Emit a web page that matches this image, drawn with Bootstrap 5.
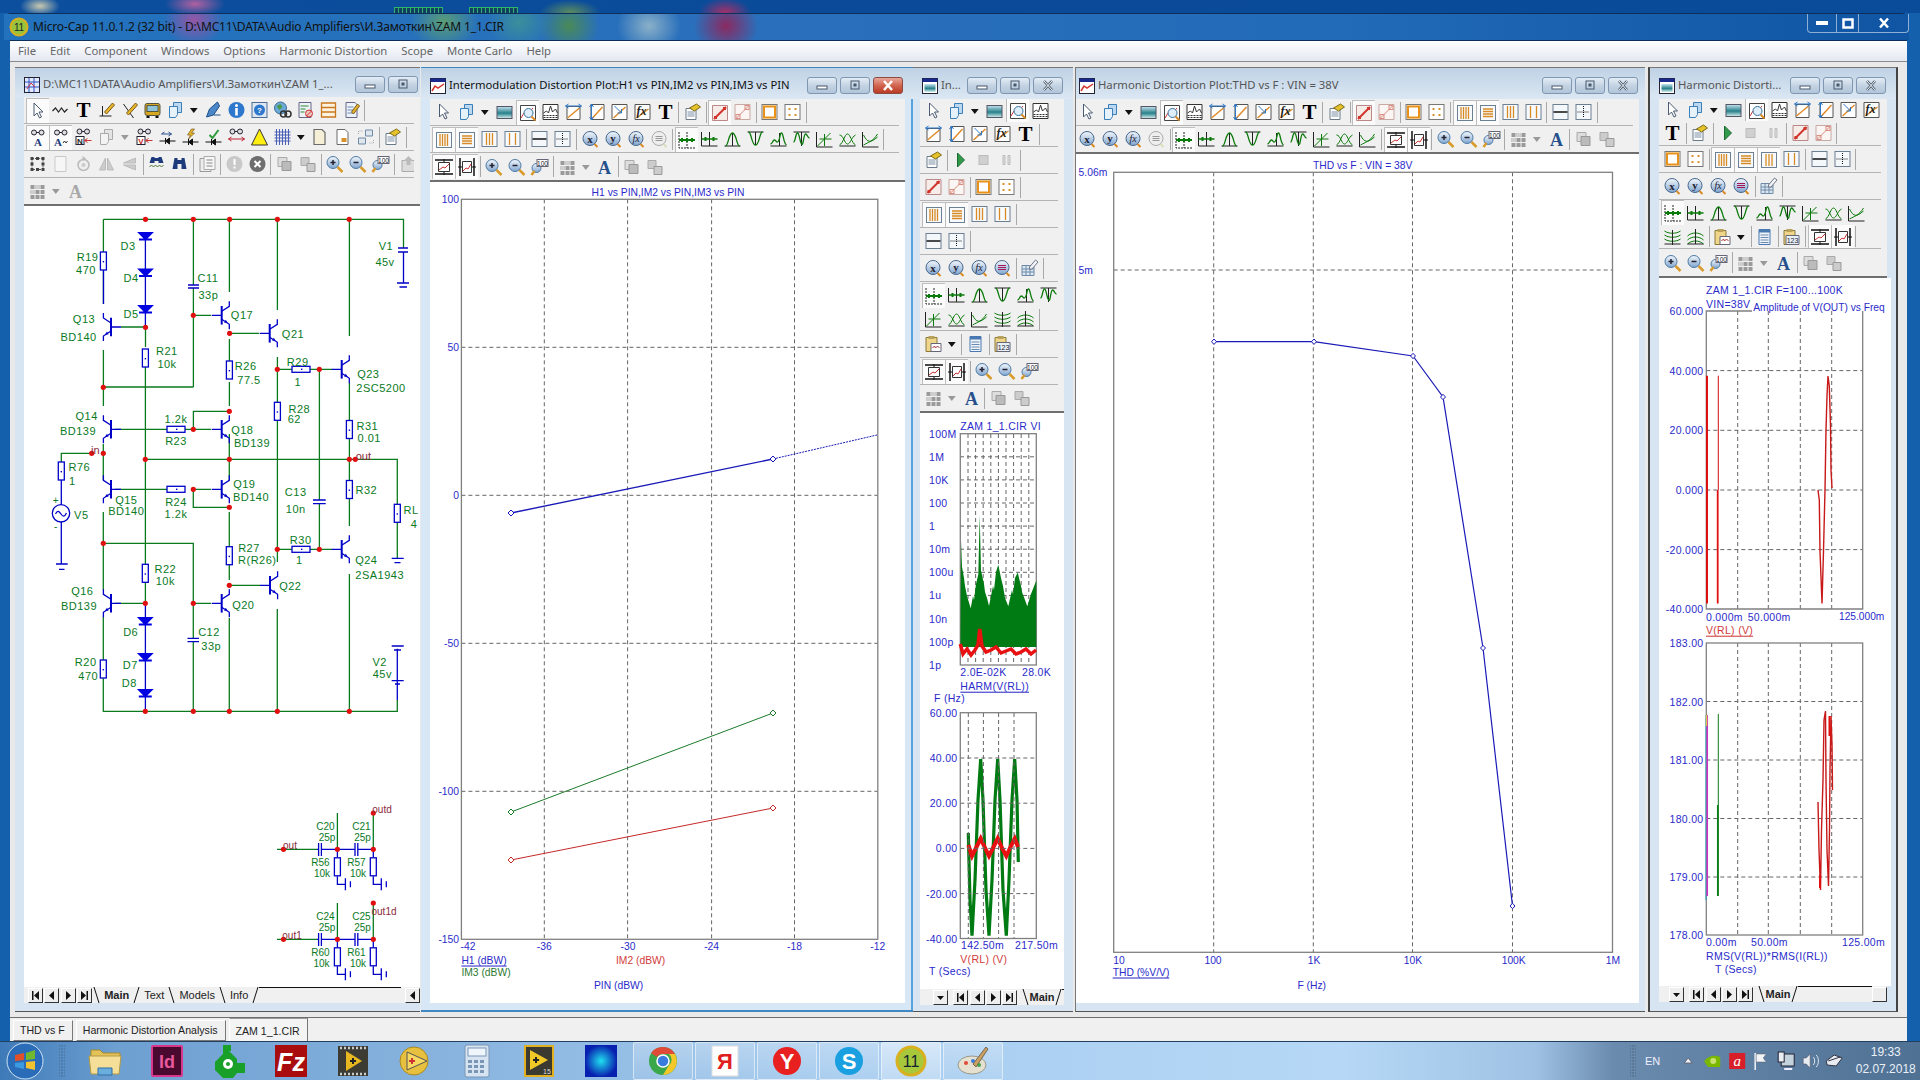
<!DOCTYPE html>
<html lang="en"><head><meta charset="utf-8"><title>Micro-Cap</title>
<link href="https://cdn.jsdelivr.net/npm/bootstrap@5.3.0/dist/css/bootstrap.min.css" rel="stylesheet">
<style>
html,body{margin:0;width:1920px;height:1080px;overflow:hidden}
body{background:#1560ad;font-family:"Noto Sans","Liberation Sans",sans-serif;font-size:12px;color:#222}
.sky{height:13px;background:radial-gradient(ellipse 30px 12px at 195px 4px,#b060a0,transparent),radial-gradient(ellipse 20px 10px at 40px 6px,#c8c8b0,transparent),radial-gradient(ellipse 30px 12px at 570px 12px,#5a8a60,transparent),radial-gradient(ellipse 26px 14px at 725px 12px,#a0306a,transparent),linear-gradient(90deg,#0c4f9e,#0a4a98 50%,#0a4c9a)}
.mkw{width:49px;height:6px;border:1px solid #2fb56a;border-bottom:0;margin-top:7px;flex:none;background:repeating-linear-gradient(90deg,#123e62 0 3px,#2fb56a 3px 4px)}
.mk1{margin-left:394px}.mk2{margin-left:26px}
.mainw{height:1028px;margin-left:4px;width:1905px;border-radius:7px 7px 0 0;border-top:1px solid #0d2f5a}
.ttl{height:26px;padding-left:5px;color:#111;font-size:12px;letter-spacing:-.15px;background:radial-gradient(ellipse 30px 26px at 190px 6px,#b050a0cc,transparent),radial-gradient(ellipse 34px 28px at 440px 8px,#5a9d76,transparent),radial-gradient(ellipse 32px 28px at 515px 8px,#3a8f9a,transparent),radial-gradient(ellipse 30px 28px at 565px 12px,#4a8a58,transparent),radial-gradient(ellipse 32px 28px at 645px 12px,#8ab0c8,transparent),radial-gradient(ellipse 32px 30px at 722px 12px,#8a2a60,transparent),linear-gradient(90deg,#2272bd,#2a6fbb 40%,#226bb8 70%,#0f55a3)}
.ctl{margin-left:auto;height:19px;width:102px;border:1px solid #8eb0d4;border-top:0;border-radius:0 0 4px 4px;align-self:flex-start}
.ctl span{display:flex;align-items:center;justify-content:center;border-right:1px solid #8eb0d4}
.ctl span:last-child{border-right:0}
.c1{width:30px}.c2{width:22px}.c3{width:50px}
.client{margin-left:6px;margin-right:2px;height:1001px;background:#f0f0f0;border-top:1px solid #0d2f5a}
.menub{height:20px;background:linear-gradient(#fff,#eef1f7 60%,#e4e8f0);padding-left:8px;color:#666;font-size:11.3px}
.menub span{margin-right:14px}
.mdi{height:957px;background:#e9e9e9;border-top:1px solid #8a8a8a;border-bottom:1px solid #6e6e6e;padding:5px 0 0 5px}
.cw{height:945px;background:#d7e4f1;border-top:1px solid #777;border-bottom:1px solid #555;flex:none}
.cw1{width:405px;padding-left:9px}
.cw2{width:492px;margin-left:1px;padding:0 8px 0 9px;background:#d8e7f5;box-shadow:inset -2px 0 #58a3dd;border-bottom:2px solid #3f88c4;border-top:1px solid #3f88c4}
.cw3{width:160px;padding:0 9px 0 7px}
.cw4{width:570px;margin-left:2px;padding-right:6px;border-left:1px solid #777}
.cw5{width:250px;margin-left:3px;padding:0 9px;border-left:2px solid #444;border-right:2px solid #444}
.head{height:31px;background:linear-gradient(#bfd2e5,#dbe7f3);margin:0 -8px 0 -9px;padding:9px 10px 0 9px;font-size:11.3px;color:#555;white-space:nowrap;overflow:hidden;flex:none}
.cw1 .head{height:29px;padding-top:8px;margin-right:0;padding-right:2px}
.cw2 .head{color:#111}
.cw3 .head{margin:0 -9px 0 -7px;padding:9px 10px 0 9px}
.cw4 .head{margin:0 -6px 0 0;padding:9px 7px 0 3px}
.cw5 .head{margin:0 -9px;padding:9px 10px 0 9px}
.hic{width:16px;height:18px;flex:none;margin-right:3px}
.wb{width:30px;height:17px;flex:none;margin-left:3px;border:1px solid #7f97b0;border-radius:3px;background:linear-gradient(#e4edf6,#c4d3e3 50%,#b2c5d9);display:flex;align-items:center;justify-content:center}
.wbr{background:linear-gradient(#e9a79b,#d2654f 50%,#b93b26);border-color:#8a4a40}
.wb svg{width:14px;height:11px}
.tbar{background:#f0f0f0;border-bottom:2px solid #6f6f6f;flex:none}
.tr{height:27px;border-bottom:1px solid #b4b4b4;flex-wrap:nowrap;padding-left:2px;margin-right:6px;overflow:hidden}
.tr.nl{border-bottom:0;margin-right:0}
.h22{height:22px}.h23{height:23px}.h24{height:24px}.h25{height:25px}.h26{height:26px}
.ti{width:23px;height:18px;flex:none}
.ti.on{height:25px;padding:3px 1px;background:#fbfbfb;border-left:1px solid #bdbdbd;border-top:1px solid #bdbdbd}
.dd{width:14.6px;height:18px;flex:none}
.sp{width:1px;height:21px;margin:0 1.65px;background:#a8a8a8;flex:none}
.cvs{display:block;background:#fff;flex:none}
.ct text{font-family:"Liberation Sans",sans-serif;font-size:11px;fill:#0a7a1e;text-anchor:middle;dominant-baseline:central;letter-spacing:.5px}
.ct .br{fill:#8a2a3a;letter-spacing:0}
.ct .s{font-size:10px;letter-spacing:0}
.pt text{font-family:"Liberation Sans",sans-serif;font-size:10.3px;fill:#2a2acb;dominant-baseline:central}
.pt .wd text{letter-spacing:.3px;font-size:10.5px}
.pt .wd .nosp{letter-spacing:0;font-size:10.2px}
.pt .gr{fill:#2c7a32}.pt .rd{fill:#d23b3b}
.pt .ra{text-anchor:end}.pt .mi{text-anchor:middle}
.bx{fill:none;stroke:#808080;stroke-width:1.3}
.gd{stroke:#666;stroke-dasharray:4 3;fill:none}
.wr{stroke:#0a7a1e;stroke-width:1.3;fill:none}
.cp{stroke:#0000c8;stroke-width:1.3;fill:none}
.rs{stroke:#0000c8;stroke-width:1.3;fill:#fff}
.dt{fill:#e01010}
.tabs{height:16px;background:#f0f0f0;font-family:"Liberation Sans",sans-serif;font-size:11px;color:#222;overflow:hidden;flex:none}
.pl13{padding-left:13px}.pl10{padding-left:10px}.wn{width:16px}.wh{width:15px;height:8px}
.nb{width:15px;height:15px;flex:none;border:1px solid #777;border-right-color:#333;border-bottom-color:#333;border-top-color:#fff;border-left-color:#fff;margin-right:1.3px;background:#eee;display:flex;align-items:center;justify-content:center}
.nb svg{width:9px;height:11px}
.sl{width:7px;height:16px;flex:none}
.tln{border-top:1.5px solid #111;height:16px;flex-grow:1}
.btabs{height:23px;font-family:"Liberation Sans",sans-serif;font-size:10.6px;color:#222;padding-left:3px;align-items:flex-end}
.btabs span{height:21px;border:1px solid #fff;border-right-color:#777;border-bottom-color:#777;margin-right:3px;padding:2px 7px 0 6px;background:#f0f0f0}
.btabs .act{border-bottom:0;height:23px;padding-top:5px;border-top:1px solid #999;background:#f4f4f4}
.task{height:39px;background:linear-gradient(90deg,#3e7ab8,#6d9fd1 6%,#86b2dd 22%,#a8cdf0 45%,#b6d8f6 70%,#9fc2e4 80%,#6a8bad 84%,#4f7194 100%);border-top:1px solid #223f5f;color:#e8eef5;font-family:"Liberation Sans",sans-serif}
.orb{width:50px;height:38px;flex:none;padding-left:6px}
.grip{width:24px;height:34px;flex:none;background-image:radial-gradient(#33465c 40%,transparent 45%);background-size:3px 3px;background-position:center;background-repeat:repeat;margin:2px 0;clip-path:inset(0 9px)}
.tk{width:62px;height:38px;flex:none;display:flex;align-items:center;justify-content:center}
.tk.rn{border:1px solid #ffffff88;border-radius:2px;background:linear-gradient(#ffffff44,#ffffff11);width:60px;margin:0 1px}
.tk.cur{background:linear-gradient(#ffffff88,#ffffff44)}
.tk svg{width:40px;height:34px}
.tray{margin-left:auto;width:299px}
.clock{text-align:center;font-size:12px;line-height:17px;width:80px;color:#eaf1f8;margin-left:9px}
.tryi{width:24.4px;height:20px;flex:none}
.trl{font-size:11px;color:#eef;width:31px}
.shd{width:14px;height:38px;margin-left:7px;background:linear-gradient(90deg,#466a8e,#7898b8);border-left:1px solid #ccd}
</style></head>
<body>
<svg width="0" height="0" class="d-block" aria-hidden="true"><defs>
<linearGradient id="bc" x1="0" y1="0" x2="0" y2="1"><stop offset="0" stop-color="#f4f8fc"/><stop offset="1" stop-color="#7fa4cf"/></linearGradient>
<linearGradient id="tl" x1="0" y1="0" x2="0" y2="1"><stop offset="0" stop-color="#c6e4f0"/><stop offset=".55" stop-color="#27808a"/><stop offset="1" stop-color="#d9f1ef"/></linearGradient>
<symbol id="ia" viewBox="0 0 18 18"><path d="M5 1v13l3-3 2.500 5 2-1-2.500-5h4z" fill="#fff" stroke="#4a5a70"/></symbol>
<symbol id="cp" viewBox="0 0 18 18"><path d="M7 1.500h8v10H7z" fill="#bcd8f0" stroke="#3b7fb8"/><path d="M3 5.500h8v8l-2 3H3z" fill="#e6f2fb" stroke="#3b7fb8"/></symbol>
<symbol id="gcp" viewBox="0 0 18 18"><path d="M7 1.500h8v10H7z" fill="#e4e4e4" stroke="#aaa"/><path d="M3 5.500h8v8l-2 3H3z" fill="#f3f3f3" stroke="#aaa"/></symbol>
<symbol id="dd" viewBox="0 0 15 18"><path d="M3 7h8l-4 5z" fill="#111"/></symbol>
<symbol id="ddg" viewBox="0 0 15 18"><path d="M3 7h8l-4 5z" fill="#999"/></symbol>
<symbol id="pic" viewBox="0 0 18 18"><rect x="1.500" y="3.500" width="15" height="12" fill="url(#tl)" stroke="#556"/></symbol>
<symbol id="zp" viewBox="0 0 18 18"><path d="M1.500 1.500h15v15h-15z" fill="#fff" stroke="#444"/><path d="M2 14l3-5 3 2 6-7" fill="none" stroke="#c33"/><circle cx="9.500" cy="9" r="4.500" fill="#dfeefb" stroke="#36719f"/><path d="M12.500 12.500l4 4" stroke="#d98a24" stroke-width="2"/></symbol>
<symbol id="pk" viewBox="0 0 18 18"><path d="M1.500 1.500h15v15h-15z" fill="#fff" stroke="#333"/><path d="M2 10l3-2 2 2 2-7 2 6 3-3 2 4" fill="none" stroke="#333"/><path d="M2 12.500h14M2 14.500h14" stroke="#333" stroke-dasharray="2 1"/></symbol>
<symbol id="ah" viewBox="0 0 18 18"><path d="M2.500 3.500h13v13h-13z" fill="#fff" stroke="#555"/><path d="M3 15L15 5" stroke="#e08a2a" stroke-width="1.500"/><path d="M1 3h16M1 3l3-2M1 3l3 2M17 3l-3-2M17 3l-3 2" stroke="#2d78c8" fill="none"/></symbol>
<symbol id="av" viewBox="0 0 18 18"><path d="M3.500 1.500h13v15h-13z" fill="#fff" stroke="#555"/><path d="M5 15L15 4" stroke="#e08a2a" stroke-width="1.500"/><path d="M4 1v16M4 1L2 4M4 1l2 3M4 17l-2-3M4 17l2-3" stroke="#2d78c8" fill="none"/></symbol>
<symbol id="ad" viewBox="0 0 18 18"><path d="M1.500 1.500h15v15h-15z" fill="#fff" stroke="#555"/><path d="M3 15L15 4" stroke="#e08a2a" stroke-width="1.500"/><path d="M4 3l7 7M11 10V6M11 10H7" stroke="#2d78c8" fill="none"/></symbol>
<symbol id="fx" viewBox="0 0 18 18"><path d="M1.500 1.500h15v15h-15z" fill="#fff" stroke="#555"/><path d="M3 15L15 6" stroke="#e08a2a" stroke-width="1.500"/><text x="3" y="12" font-family="Liberation Serif" font-size="12" font-style="italic" font-weight="700" fill="#222">fx</text></symbol>
<symbol id="tt" viewBox="0 0 18 18"><text x="9" y="16" text-anchor="middle" font-family="Liberation Serif" font-size="21" font-weight="700" fill="#000">T</text></symbol>
<symbol id="nt" viewBox="0 0 18 18"><path d="M2.500 5.500h10v11h-10z" fill="#fff" stroke="#6a7a8a"/><path d="M4 9h7M4 11h7M4 13h7" stroke="#7a8fa6"/><path d="M6 5l7-4 4 3-6 4z" fill="#e6c22a" stroke="#7a6a1a"/></symbol>
<symbol id="r1" viewBox="0 0 18 18"><path d="M1.500 1.500h15v15h-15z" fill="#f6ece8" stroke="#b88"/><path d="M3 15L15 3" stroke="#d2342c" stroke-width="2"/><rect x="3" y="12" width="3" height="3" fill="#d2342c"/><rect x="12" y="3" width="3" height="3" fill="#d2342c"/></symbol>
<symbol id="r2" viewBox="0 0 18 18"><path d="M1.500 1.500h15v15h-15z" fill="#fbf6f4" stroke="#c9a9a3"/><path d="M3 15L15 3" stroke="#d98c80"/><rect x="2.500" y="11.500" width="4" height="4" fill="none" stroke="#d98c80"/><rect x="11.500" y="2.500" width="4" height="4" fill="none" stroke="#d98c80"/></symbol>
<symbol id="os" viewBox="0 0 18 18"><rect x="1.500" y="1.500" width="15" height="15" fill="#fff3d8" stroke="#777"/><rect x="3.500" y="3.500" width="11" height="11" fill="#fff" stroke="#e8921c" stroke-width="2"/></symbol>
<symbol id="ds" viewBox="0 0 18 18"><rect x="1.500" y="1.500" width="15" height="15" fill="#fff" stroke="#777"/><path d="M5 5h2v2H5zM11 5h2v2h-2zM5 11h2v2H5zM11 11h2v2h-2z" fill="#d8912a"/></symbol>
<symbol id="vb" viewBox="0 0 18 18"><rect x="1.500" y="1.500" width="15" height="15" fill="#f7fbff" stroke="#6d7f92"/><path d="M5 3v12M7.500 3v12M10 3v12M12.500 3v12" stroke="#d98a24" stroke-width="1.300"/></symbol>
<symbol id="hb" viewBox="0 0 18 18"><rect x="1.500" y="1.500" width="15" height="15" fill="#f7fbff" stroke="#6d7f92"/><path d="M4 5h10M4 7.500h10M4 10h10M4 12.500h10" stroke="#d98a24" stroke-width="1.300"/></symbol>
<symbol id="v3" viewBox="0 0 18 18"><rect x="1.500" y="1.500" width="15" height="15" fill="#f7fbff" stroke="#6d7f92"/><path d="M6 3v12M9 3v12M12 3v12" stroke="#d98a24" stroke-width="1.300"/></symbol>
<symbol id="v2" viewBox="0 0 18 18"><rect x="1.500" y="1.500" width="15" height="15" fill="#f7fbff" stroke="#6d7f92"/><path d="M6 3v12M12 3v12" stroke="#d98a24" stroke-width="1.300"/></symbol>
<symbol id="hl" viewBox="0 0 18 18"><rect x="1.500" y="1.500" width="15" height="15" fill="#f4f8fb" stroke="#6d7f92"/><path d="M2 9h14" stroke="#111" stroke-width="1.500"/></symbol>
<symbol id="cr" viewBox="0 0 18 18"><rect x="1.500" y="1.500" width="15" height="15" fill="#f4f8fb" stroke="#6d7f92"/><path d="M3 9h12M9 3v12" stroke="#111" stroke-dasharray="1 1"/></symbol>
<symbol id="cx" viewBox="0 0 18 18"><circle cx="8.500" cy="8.500" r="7" fill="url(#bc)" stroke="#48688e"/><text x="8.500" y="12.500" text-anchor="middle" font-family="Liberation Serif" font-weight="700" font-size="11" fill="#223">x</text><path d="M13 14l3 3" stroke="#d98a24" stroke-width="2"/></symbol>
<symbol id="cy" viewBox="0 0 18 18"><circle cx="8.500" cy="8.500" r="7" fill="url(#bc)" stroke="#48688e"/><text x="8.500" y="12" text-anchor="middle" font-family="Liberation Serif" font-weight="700" font-size="11" fill="#223">y</text><path d="M13 14l3 3" stroke="#d98a24" stroke-width="2"/></symbol>
<symbol id="cf" viewBox="0 0 18 18"><circle cx="8.500" cy="8.500" r="7" fill="url(#bc)" stroke="#48688e"/><text x="8.500" y="12" text-anchor="middle" font-family="Liberation Serif" font-style="italic" font-size="10" fill="#223">fx</text><path d="M13 14l3 3" stroke="#d98a24" stroke-width="2"/></symbol>
<symbol id="cg" viewBox="0 0 18 18"><circle cx="8.500" cy="8.500" r="7" fill="#eee" stroke="#aaa"/><path d="M5 6.500h7M5 8.500h7M5 10.500h7" stroke="#999"/><path d="M13 14l3 3" stroke="#ddb" stroke-width="2"/></symbol>
<symbol id="ce" viewBox="0 0 18 18"><circle cx="8.500" cy="8.500" r="7" fill="url(#bc)" stroke="#48688e"/><path d="M4.500 6.500h8M4.500 8.500h8M4.500 10.500h8" stroke="#a2185a"/><path d="M13 14l3 3" stroke="#d98a24" stroke-width="2"/></symbol>
<symbol id="tb" viewBox="0 0 18 18"><path d="M1.500 6.500h12v10h-12z" fill="#dbe8f4" stroke="#6f8aa6"/><path d="M1.500 10h12M1.500 13h12M5.500 6.500v10M9.500 6.500v10" stroke="#6f8aa6"/><path d="M9 8l6-7 2.500 2-6 7H9z" fill="#eef3f8" stroke="#778"/></symbol>
<symbol id="g1" viewBox="0 0 18 18"><path d="M1 1v16h16M1 9h16M9 1v16" fill="none" stroke="#222" stroke-dasharray="2 1"/><path d="M1 9h16" stroke="#0a7a0a" stroke-width="2"/><path d="M4 7v4M9 7v4M14 7v4" stroke="#0a7a0a" stroke-width="2"/></symbol>
<symbol id="g2" viewBox="0 0 18 18"><path d="M1 2v14h16M9 2v14" fill="none" stroke="#222"/><path d="M1 9h16" stroke="#0a7a0a" stroke-width="1.500"/><path d="M5 7v4M13 7v4" stroke="#0a7a0a" stroke-width="2"/></symbol>
<symbol id="g3" viewBox="0 0 18 18"><path d="M1 16h16M9 3v13" fill="none" stroke="#222"/><path d="M2 16C5 16 5 3 9 3s4 13 7 13" fill="none" stroke="#0a7a0a" stroke-width="1.300"/></symbol>
<symbol id="g4" viewBox="0 0 18 18"><path d="M1 2h16M9 2v13" fill="none" stroke="#222"/><path d="M2 2c3 0 3 13 7 13s4-13 7-13" fill="none" stroke="#0a7a0a" stroke-width="1.300"/></symbol>
<symbol id="g5" viewBox="0 0 18 18"><path d="M1 16h16M10 3v13" fill="none" stroke="#222"/><path d="M1 14c2 0 2-4 4-4s2 4 4 1 1-8 3-8 2 11 5 12" fill="none" stroke="#0a7a0a" stroke-width="1.300"/></symbol>
<symbol id="g6" viewBox="0 0 18 18"><path d="M1 2h16M9 2v14" fill="none" stroke="#222"/><path d="M1 12c2 0 2-9 4-9s2 8 4 11 2-10 4-10 2 4 4 4" fill="none" stroke="#0a7a0a" stroke-width="1.300"/></symbol>
<symbol id="g7" viewBox="0 0 18 18"><path d="M1 2v15h16" fill="none" stroke="#222"/><path d="M2 16L15 3M9 4v12M4 9h12" fill="none" stroke="#0a7a0a"/></symbol>
<symbol id="g8" viewBox="0 0 18 18"><path d="M1 16h16" fill="none" stroke="#222"/><path d="M1 15c4-2 5-11 8-11s4 9 8 11M1 5c4 0 5 9 8 9s4-7 8-9" fill="none" stroke="#0a7a0a"/></symbol>
<symbol id="g9" viewBox="0 0 18 18"><path d="M1 2v15h16" fill="none" stroke="#222"/><path d="M2 5c4 8 7 8 14 2M2 15c5-3 9-3 14-11" fill="none" stroke="#0a7a0a"/></symbol>
<symbol id="g10" viewBox="0 0 18 18"><path d="M1 3c4 3 12 3 16 0M1 7c4 3 12 3 16 0M1 11c4 3 12 3 16 0" fill="none" stroke="#0a7a0a"/><path d="M9 2v15M1 16h16" stroke="#222"/></symbol>
<symbol id="g11" viewBox="0 0 18 18"><path d="M1 8c4-4 12-4 16 0M1 12c4-4 12-4 16 0M1 16c4-4 12-4 16 0" fill="none" stroke="#0a7a0a"/><path d="M9 1v15M1 16h16" stroke="#222"/></symbol>
<symbol id="cl" viewBox="0 0 18 18"><path d="M1.500 2.500h11v14h-11z" fill="#efd68a" stroke="#8a7a3a"/><rect x="4" y="1" width="6" height="3" fill="#b8a15a"/><path d="M6.500 8.500h10v8h-10z" fill="#fff" stroke="#667"/><path d="M8 13l2-2 1 2 2-2 2 2" fill="none" stroke="#a33"/></symbol>
<symbol id="cn" viewBox="0 0 18 18"><path d="M1.500 2.500h11v14h-11z" fill="#efd68a" stroke="#8a7a3a"/><rect x="4" y="1" width="6" height="3" fill="#b8a15a"/><path d="M3.500 7.500h13v9h-13z" fill="#e8f1f8" stroke="#667"/><text x="10" y="15" text-anchor="middle" font-family="Liberation Sans" font-size="7" fill="#223">123</text></symbol>
<symbol id="ls" viewBox="0 0 18 18"><path d="M3.500 1.500h11v15h-11z" fill="#eef4fa" stroke="#4a78b0"/><path d="M3.500 1.500h11v3h-11z" fill="#4a78b0"/><path d="M5 7h8M5 9.500h8M5 12h8M5 14.500h8" stroke="#6a8ab0"/></symbol>
<symbol id="s1" viewBox="0 0 18 18"><path d="M3.500 4.500h11v9h-11z" fill="#fff" stroke="#333"/><path d="M0 2h18M0 16h18" stroke="#111" stroke-width="1.500"/><path d="M4 12l4-3 2 1 4-4" fill="none" stroke="#c33"/><path d="M9 1v3M9 14v3" stroke="#111"/></symbol>
<symbol id="s2" viewBox="0 0 18 18"><path d="M4.500 3.500h9v11h-9z" fill="#fff" stroke="#333"/><path d="M2 0v18M16 0v18" stroke="#111" stroke-width="1.500"/><path d="M5 13l3-3 2 1 3-5" fill="none" stroke="#c33"/><path d="M0 9h4M14 9h4" stroke="#111"/></symbol>
<symbol id="zi" viewBox="0 0 18 18"><circle cx="7.500" cy="7.500" r="6" fill="url(#bc)" stroke="#4d7aa4"/><path d="M5 7.500h5M7.500 5v5" stroke="#223" stroke-width="1.500"/><path d="M12 12l5 5" stroke="#d89a2a" stroke-width="2.500"/></symbol>
<symbol id="zo" viewBox="0 0 18 18"><circle cx="7.500" cy="7.500" r="6" fill="url(#bc)" stroke="#4d7aa4"/><path d="M5 7.500h5" stroke="#223" stroke-width="1.500"/><path d="M12 12l5 5" stroke="#d89a2a" stroke-width="2.500"/></symbol>
<symbol id="z1" viewBox="0 0 18 18"><circle cx="6" cy="10" r="4.500" fill="url(#bc)" stroke="#4d7aa4"/><path d="M4 13l-3 4" stroke="#d89a2a" stroke-width="2.500"/><rect x="6.500" y="1.500" width="11" height="7" fill="#fff" stroke="#667"/><text x="12" y="7.500" text-anchor="middle" font-family="Liberation Sans" font-size="6.500" fill="#223">100</text></symbol>
<symbol id="gd" viewBox="0 0 18 18"><path d="M2 3h4v4H2zM7 3h4v4H7zM12 3h4v4h-4zM2 8h4v4H2zM7 8h4v4H7zM12 8h4v4h-4zM2 13h4v4H2zM7 13h4v4H7zM12 13h4v4h-4z" fill="#9a9a9a"/><path d="M7 3h4v4H7zM2 8h4v4H2z" fill="#cfcfcf"/></symbol>
<symbol id="bA" viewBox="0 0 18 18"><text x="9" y="16" text-anchor="middle" font-family="Liberation Serif" font-size="18" font-weight="700" fill="#26508c">A</text></symbol>
<symbol id="gA" viewBox="0 0 18 18"><text x="9" y="16" text-anchor="middle" font-family="Liberation Serif" font-size="18" font-weight="700" fill="#a8a8a8">A</text></symbol>
<symbol id="q1" viewBox="0 0 18 18"><path d="M2.500 2.500h9v9h-9z" fill="#ddd" stroke="#aaa"/><path d="M6.500 6.500h9v9h-9z" fill="#bbb" stroke="#999"/></symbol>
<symbol id="q2" viewBox="0 0 18 18"><path d="M2.500 2.500h8v8h-8z" fill="#ccc" stroke="#aaa"/><path d="M8.500 8.500h8v8h-8z" fill="#ccc" stroke="#999"/></symbol>
<symbol id="pl" viewBox="0 0 18 18"><path d="M6 2l7 7-7 7z" fill="#2f9a4a" stroke="#1d6a30"/></symbol>
<symbol id="st" viewBox="0 0 18 18"><rect x="4.500" y="4.500" width="9" height="9" fill="#d0d0d0" stroke="#bbb"/></symbol>
<symbol id="pa" viewBox="0 0 18 18"><path d="M5.500 4.500h2v9h-2zM10.500 4.500h2v9h-2z" fill="#e0e0e0" stroke="#bbb"/></symbol>
<symbol id="wv" viewBox="0 0 18 18"><path d="M1 10l3-3 3 4 3-4 3 4 3-3" fill="none" stroke="#222" stroke-width="1.200"/></symbol>
<symbol id="p1" viewBox="0 0 18 18"><path d="M2 15h12M5 15V5" stroke="#222" fill="none"/><path d="M7 11L15 2l2 2-8 9z" fill="#e8b62a" stroke="#7a5a1a"/></symbol>
<symbol id="p2" viewBox="0 0 18 18"><path d="M3 3l10 14" stroke="#222"/><path d="M6 12L15 2l2 2-9 10z" fill="#e8b62a" stroke="#7a5a1a"/></symbol>
<symbol id="bu" viewBox="0 0 18 18"><rect x="1.500" y="2.500" width="15" height="12" rx="2" fill="#d8a81e" stroke="#554"/><rect x="3.500" y="4.500" width="11" height="6" fill="#8fc4d8" stroke="#554"/><path d="M3 16h3M12 16h3" stroke="#111" stroke-width="2"/></symbol>
<symbol id="pn" viewBox="0 0 18 18"><path d="M2 16l3-8 8-7 2 4-6 9z" fill="#4a86c8" stroke="#1f4f8a"/><path d="M9 14h7" stroke="#1f4f8a"/></symbol>
<symbol id="in" viewBox="0 0 18 18"><circle cx="9" cy="9" r="8" fill="#2d78cc"/><circle cx="9" cy="4.500" r="1.500" fill="#fff"/><rect x="7.700" y="7" width="2.600" height="7.500" fill="#fff"/></symbol>
<symbol id="hp" viewBox="0 0 18 18"><rect x="1.500" y="1.500" width="15" height="15" fill="#dfe8f2" stroke="#4c6e94"/><circle cx="9" cy="9" r="5.500" fill="#2d78cc"/><text x="9" y="12" text-anchor="middle" font-family="Liberation Sans" font-size="8" font-weight="700" fill="#fff">?</text></symbol>
<symbol id="gl" viewBox="0 0 18 18"><circle cx="7" cy="7" r="6" fill="#6aa9d8" stroke="#3d6f98"/><path d="M3 5l4-2 2 3-3 3z" fill="#4a9a4a"/><circle cx="10" cy="13" r="3" fill="none" stroke="#333" stroke-width="1.500"/><circle cx="14.500" cy="13" r="3" fill="none" stroke="#333" stroke-width="1.500"/></symbol>
<symbol id="ck" viewBox="0 0 18 18"><path d="M2.500 1.500h12v15h-12z" fill="#eef3f8" stroke="#668"/><path d="M4 5h8M4 8h5M4 11h4" stroke="#2f8a3a"/><circle cx="12.500" cy="12.500" r="3.500" fill="#f0c8c0" stroke="#c33"/><path d="M10 15l5-5" stroke="#c33"/></symbol>
<symbol id="ol" viewBox="0 0 18 18"><path d="M2 2h14v14H2zM2 6.500h14M2 11h14" fill="#fdf3df" stroke="#c9781e" stroke-width="1.300"/></symbol>
<symbol id="dp" viewBox="0 0 18 18"><path d="M3.500 1.500h9l2 2v13h-11z" fill="#eef3fa" stroke="#668"/><path d="M5 6h6M5 9h6M5 12h6" stroke="#6a8ab0"/><path d="M9 11l6-8 2 2-6 8z" fill="#e8b62a" stroke="#7a5a1a"/></symbol>
<symbol id="ga" viewBox="0 0 18 18"><circle cx="5" cy="3.500" r="2.500" fill="#ddd" stroke="#223"/><circle cx="12.500" cy="3.500" r="2.500" fill="#ddd" stroke="#223"/><path d="M7 3.500h3" stroke="#223"/><text x="9" y="16.500" text-anchor="middle" font-family="Liberation Serif" font-weight="700" font-size="11" fill="#1c3a7c">A</text></symbol>
<symbol id="gw" viewBox="0 0 18 18"><circle cx="5" cy="3.500" r="2.500" fill="#ddd" stroke="#223"/><circle cx="12.500" cy="3.500" r="2.500" fill="#ddd" stroke="#223"/><path d="M7 3.500h3" stroke="#223"/><text x="6" y="16.500" text-anchor="middle" font-family="Liberation Serif" font-weight="700" font-size="11" fill="#1c3a7c">A</text><path d="M11 14l1.500-2 1.500 2 1.500-2" fill="none" stroke="#333"/></symbol>
<symbol id="gn" viewBox="0 0 18 18"><circle cx="5" cy="3.500" r="2.500" fill="#ddd" stroke="#223"/><circle cx="12.500" cy="3.500" r="2.500" fill="#ddd" stroke="#223"/><path d="M7 3.500h3" stroke="#223"/><rect x="1.500" y="8.500" width="8" height="8" fill="#fff" stroke="#223"/><text x="5.500" y="15.500" text-anchor="middle" font-family="Liberation Sans" font-weight="700" font-size="8" fill="#222">N</text><path d="M10 12.500h7M10 12.500l3-2M10 12.500l3 2" stroke="#c33" fill="none"/></symbol>
<symbol id="gv" viewBox="0 0 18 18"><circle cx="5" cy="3.500" r="2.500" fill="#ddd" stroke="#223"/><circle cx="12.500" cy="3.500" r="2.500" fill="#ddd" stroke="#223"/><path d="M7 3.500h3" stroke="#223"/><rect x="1.500" y="8.500" width="8" height="8" fill="#fff" stroke="#223"/><text x="5.500" y="15.500" text-anchor="middle" font-family="Liberation Sans" font-weight="700" font-size="8" fill="#c22">V</text><path d="M10 12.500h7M10 12.500l3-2M10 12.500l3 2" stroke="#c33" fill="none"/></symbol>
<symbol id="d1" viewBox="0 0 18 18"><path d="M3 6h10M3 6l3-2M13 6l-3-2M13 6l-3 2" stroke="#2b4f8c" fill="none"/><path d="M1 13h16M7 10v6M11 10l-4 3 4 3z" stroke="#111" fill="#111"/></symbol>
<symbol id="d2" viewBox="0 0 18 18"><path d="M10 1L6 7h3L7 11l6-6h-3l3-4z" fill="#e8b62a" stroke="#7a5a1a" stroke-width=".7"/><path d="M1 14h16M7 11v6M11 11l-4 3 4 3z" stroke="#111" fill="#111"/></symbol>
<symbol id="d3" viewBox="0 0 18 18"><path d="M5 7l3 3 6-8" fill="none" stroke="#2c9a3a" stroke-width="2"/><path d="M1 14h16M7 11v6M11 11l-4 3 4 3z" stroke="#111" fill="#111"/></symbol>
<symbol id="d4" viewBox="0 0 18 18"><circle cx="5" cy="3.500" r="2.500" fill="#ddd" stroke="#223"/><circle cx="12.500" cy="3.500" r="2.500" fill="#ddd" stroke="#223"/><path d="M7 3.500h3" stroke="#223"/><path d="M1 11h16M1 11l3-2M1 11l3 2M17 11l-3-2M17 11l-3 2" stroke="#b23" fill="none"/></symbol>
<symbol id="tr" viewBox="0 0 18 18"><path d="M9 1l8 16H1z" fill="#ffef10" stroke="#333"/></symbol>
<symbol id="gr" viewBox="0 0 18 18"><path d="M1 4h16M1 7h16M1 10h16M1 13h16M3 1v16M6 1v16M9 1v16M12 1v16M15 1v16" stroke="#4a5fb8"/></symbol>
<symbol id="dc" viewBox="0 0 18 18"><path d="M3.500 1.500h8l3 3v12h-11z" fill="#f6efd8" stroke="#6a6a6a" stroke-width="1.200"/></symbol>
<symbol id="dc2" viewBox="0 0 18 18"><path d="M3.500 1.500h8l3 3v12h-11z" fill="#fff" stroke="#6a6a6a"/><rect x="8" y="10" width="5" height="4" fill="#d8912a"/></symbol>
<symbol id="bk" viewBox="0 0 18 18"><path d="M9 2h7v6H9zM2 10h7v6H2z" fill="#dfe6ee" stroke="#6f8aa6"/><path d="M6 3H2v4M13 15h4v-4" fill="none" stroke="#aaa" stroke-dasharray="1 1"/></symbol>
<symbol id="nd" viewBox="0 0 18 18"><path d="M3.500 3.500h11v11h-11z" fill="none" stroke="#555" stroke-dasharray="2 1"/><path d="M2 2h3v3H2zM7.500 2h3v3h-3zM13 2h3v3h-3zM2 7.500h3v3H2zM13 7.500h3v3h-3zM2 13h3v3H2zM7.500 13h3v3h-3zM13 13h3v3h-3z" fill="#444"/></symbol>
<symbol id="pg" viewBox="0 0 18 18"><path d="M3.500 1.500h11v15h-11z" fill="#f6f6f6" stroke="#c9c9c9"/></symbol>
<symbol id="rt" viewBox="0 0 18 18"><circle cx="9" cy="10" r="5.500" fill="#eee" stroke="#bbb" stroke-width="1.500"/><circle cx="9" cy="10" r="2" fill="#ccc"/><path d="M8 1l4 3-4 2z" fill="#bbb"/></symbol>
<symbol id="mr" viewBox="0 0 18 18"><path d="M8 3v12H2zM10 3v12h6z" fill="#ccc" stroke="#bbb"/></symbol>
<symbol id="fp" viewBox="0 0 18 18"><path d="M15 3v5H3zM15 15v-5H3z" fill="#ccc" stroke="#bbb"/></symbol>
<symbol id="b1" viewBox="0 0 18 18"><path d="M2 8l2-6h3v6zM16 8l-2-6h-3v6z" fill="#1c3a7c"/><rect x="6" y="3" width="6" height="3" fill="#1c3a7c"/><path d="M2 12l2-2 2 2 2-2 2 2 2-2 2 2 2-2" fill="none" stroke="#4a7a3a"/></symbol>
<symbol id="b2" viewBox="0 0 18 18"><path d="M2 14l2-11h3v11zM16 14l-2-11h-3v11z" fill="#1c3a7c"/><rect x="6" y="5" width="6" height="4" fill="#1c3a7c"/></symbol>
<symbol id="gc" viewBox="0 0 18 18"><path d="M1.500 3.500h11v13h-11z" fill="#eee" stroke="#999"/><path d="M5.500 1.500h11v13h-11z" fill="#f6f6f6" stroke="#aaa"/><path d="M8 5h6M8 8h6M8 11h6" stroke="#888"/></symbol>
<symbol id="cq" viewBox="0 0 18 18"><circle cx="9" cy="9" r="8" fill="#c9c9c9"/><rect x="8" y="4" width="2" height="6" fill="#fff"/><rect x="8" y="11.500" width="2" height="2" fill="#fff"/></symbol>
<symbol id="cz" viewBox="0 0 18 18"><circle cx="9" cy="9" r="8" fill="#6e6e6e"/><path d="M6 6l6 6M12 6l-6 6" stroke="#fff" stroke-width="2"/></symbol>
<symbol id="up" viewBox="0 0 18 18"><path d="M2.500 5.500h13v11h-13z" fill="#ddd" stroke="#aaa"/><path d="M9 1l5 5h-3v4H7V6H4z" fill="#bbb"/></symbol>
<symbol id="mn" viewBox="0 0 14 11"><rect x="2" y="6" width="10" height="3" fill="#fff" stroke="#46586c"/></symbol>
<symbol id="mx" viewBox="0 0 14 11"><rect x="3" y="1" width="8" height="8" fill="none" stroke="#46586c"/><rect x="5.500" y="3.500" width="3" height="3" fill="#46586c"/></symbol>
<symbol id="xx" viewBox="0 0 14 11"><path d="M3 1l8 9M11 1l-8 9" stroke="#46586c" stroke-width="2.500"/><path d="M3 1l8 9M11 1l-8 9" stroke="#fff" stroke-width="1"/></symbol>
<symbol id="xw" viewBox="0 0 14 11"><path d="M3 1l8 9M11 1l-8 9" stroke="#fff" stroke-width="2.500"/></symbol>
<symbol id="h1" viewBox="0 0 16 18"><rect x=".5" y="1.500" width="15" height="15" fill="#fff" stroke="#223"/><rect x=".5" y="1.500" width="15" height="3.500" fill="#1a2a8c"/><path d="M2 14l3-5 3 2 6-4" fill="none" stroke="#d2342c" stroke-width="1.500"/></symbol>
<symbol id="h2" viewBox="0 0 16 18"><rect x=".5" y="1.500" width="15" height="15" fill="#fff" stroke="#223"/><rect x=".5" y="1.500" width="15" height="3.500" fill="#1a2a8c"/><rect x="2.500" y="7" width="11" height="8" fill="url(#tl)"/></symbol>
<symbol id="h3" viewBox="0 0 16 18"><rect x=".5" y="1.500" width="15" height="15" fill="#dfe9ff" stroke="#223"/><path d="M1 6h14M1 11h14M5 2v14M10 2v14" stroke="#2f50c0"/><path d="M3 13l4-6 4 4" fill="none" stroke="#c33"/></symbol>
<symbol id="n0" viewBox="0 0 9 11"><path d="M1 4h7L4.500 8z" fill="#111"/></symbol>
<symbol id="n1" viewBox="0 0 9 11"><path d="M1 1h1.500v9H1zM8 1v9L3 5.500z" fill="#111"/></symbol>
<symbol id="n2" viewBox="0 0 9 11"><path d="M7 1v9L2 5.500z" fill="#111"/></symbol>
<symbol id="n3" viewBox="0 0 9 11"><path d="M2 1v9l5-4.500z" fill="#111"/></symbol>
<symbol id="n4" viewBox="0 0 9 11"><path d="M8 1H6.500v9H8zM1 1v9l5-4.500z" fill="#111"/></symbol>
<g id="qR"><path d="M0-9.300V9.300" stroke="#0000c8" stroke-width="2"/><path d="M0-4L7.600-9V-14M0 4L7.600 9V14M-10 0H0" class="cp"/><path d="M6 7.500L2.500 7.500 4 4.500z" fill="#0000c8"/></g>
<g id="qL"><path d="M0-9.300V9.300" stroke="#0000c8" stroke-width="2"/><path d="M0-4L-7.600-9V-14M0 4L-7.600 9V14M10 0H0" class="cp"/><path d="M-6 7.500L-2.500 7.500-4 4.500z" fill="#0000c8"/></g>
<g id="rv"><rect x="-3" y="0" width="6" height="18" class="rs"/><rect x="-.7" y="9" width="1.400" height="1.400" fill="#0000c8"/></g>
<g id="rh"><rect x="0" y="-3" width="18" height="6" class="rs"/><rect x="9" y="-.7" width="1.400" height="1.400" fill="#0000c8"/></g>
<g id="di"><path d="M-6 0H6L0 6zM-6.500 6.500H6.500" fill="#0000e0" stroke="#0000e0" stroke-width="2"/></g>
<g id="sm"><path d="M0 0V8.300M0 27V35H8M8 29V41M13 32V38" class="cp"/><rect x="-3" y="8.500" width="6" height="18" class="rs"/></g>
</defs></svg>

<div class="sky d-flex"><span class="mkw mk1"></span><span class="mkw mk2"></span></div>
<div class="mainw">
<div class="ttl d-flex align-items-center">
<svg width="20" height="20" class="me-1 flex-none" viewBox="0 0 20 20"><circle cx="10" cy="10" r="8.500" fill="#9ac23a" stroke="#d8b020" stroke-width="2"/><text x="10" y="14" text-anchor="middle" font-family="Liberation Sans" font-size="10" fill="#123">11</text></svg>
<span>Micro-Cap 11.0.1.2 (32 bit) - D:\MC11\DATA\Audio Amplifiers\И.Замоткин\ZAM 1_1.CIR</span>
<div class="ctl d-flex"><span class="c1"><svg width="12" height="4"><rect width="12" height="4" x="0" y="0" fill="#fff"/></svg></span><span class="c2"><svg width="12" height="11"><rect x="1.500" y="1.500" width="9" height="8" fill="none" stroke="#fff" stroke-width="2.500"/></svg></span><span class="c3"><svg width="14" height="12"><use href="#xw"/></svg></span></div>
</div>
<div class="client">
<div class="menub d-flex align-items-center"><span>File</span><span>Edit</span><span>Component</span><span>Windows</span><span>Options</span><span>Harmonic Distortion</span><span>Scope</span><span>Monte Carlo</span><span>Help</span></div>
<div class="mdi d-flex">

<!-- WINDOW 1 -->
<div class="cw cw1 d-flex flex-column">
<div class="head d-flex align-items-start"><svg class="hic"><use href="#h3"/></svg><span class="flex-grow-1">D:\MC11\DATA\Audio Amplifiers\И.Замоткин\ZAM 1_...</span><span class="wb"><svg><use href="#mn"/></svg></span><span class="wb"><svg><use href="#mx"/></svg></span></div>
<div class="tbar">
<div class="tr d-flex align-items-center"><svg class="ti on"><use href="#ia"/></svg><svg class="ti"><use href="#wv"/></svg><svg class="ti"><use href="#tt"/></svg><svg class="ti"><use href="#p1"/></svg><svg class="ti"><use href="#p2"/></svg><svg class="ti"><use href="#bu"/></svg><svg class="ti"><use href="#cp"/></svg><svg class="dd"><use href="#dd"/></svg><svg class="ti"><use href="#pn"/></svg><svg class="ti"><use href="#in"/></svg><svg class="ti"><use href="#hp"/></svg><svg class="ti"><use href="#gl"/></svg><svg class="ti"><use href="#ck"/></svg><svg class="ti"><use href="#ol"/></svg><svg class="ti"><use href="#dp"/></svg><i class="sp"></i></div>
<div class="tr d-flex align-items-center"><svg class="ti on"><use href="#ga"/></svg><svg class="ti on"><use href="#gw"/></svg><svg class="ti"><use href="#gn"/></svg><svg class="ti"><use href="#gcp"/></svg><svg class="dd"><use href="#ddg"/></svg><svg class="ti"><use href="#gv"/></svg><svg class="ti"><use href="#d1"/></svg><svg class="ti"><use href="#d2"/></svg><svg class="ti"><use href="#d3"/></svg><svg class="ti"><use href="#d4"/></svg><svg class="ti"><use href="#tr"/></svg><svg class="ti"><use href="#gr"/></svg><svg class="dd"><use href="#dd"/></svg><svg class="ti"><use href="#dc"/></svg><svg class="ti"><use href="#dc2"/></svg><svg class="ti"><use href="#bk"/></svg><i class="sp"></i><svg class="ti"><use href="#nt"/></svg><i class="sp"></i></div>
<div class="tr d-flex align-items-center"><svg class="ti"><use href="#nd"/></svg><svg class="ti"><use href="#pg"/></svg><svg class="ti"><use href="#rt"/></svg><svg class="ti"><use href="#mr"/></svg><svg class="ti"><use href="#fp"/></svg><i class="sp"></i><svg class="ti"><use href="#b1"/></svg><svg class="ti"><use href="#b2"/></svg><i class="sp"></i><svg class="ti"><use href="#gc"/></svg><i class="sp"></i><svg class="ti"><use href="#cq"/></svg><svg class="ti"><use href="#cz"/></svg><i class="sp"></i><svg class="ti"><use href="#q1"/></svg><svg class="ti"><use href="#q2"/></svg><i class="sp"></i><svg class="ti"><use href="#zi"/></svg><svg class="ti"><use href="#zo"/></svg><svg class="ti"><use href="#z1"/></svg><i class="sp"></i><svg class="ti"><use href="#up"/></svg></div>
<div class="tr nl h26 d-flex align-items-center"><svg class="ti"><use href="#gd"/></svg><svg class="dd"><use href="#ddg"/></svg><svg class="ti"><use href="#gA"/></svg></div>
</div>
<svg class="cvs ct" width="396" height="781" viewBox="25 206 396 781">
<g class="wr">
<path d="M104.500 219.300H404.500V248M104.400 219.300V252M104.400 271V304M146.500 327V347M146.400 367V564M146.400 582V603M194.400 219.300V285M194.400 288V387M104.400 387H194.400M104.400 350V406M230.400 219.300V292M230.400 339V361M230.400 382V406M194.400 429.300V411.300H230.400M173 429.300H212M116 429.300H168M278.400 219.300V310M278.400 357V402M278.400 421V562M278.400 369.300H293M311 369.300H333M320.400 369.300V500M320.400 504V549.300M293 549.300H278.400M311 549.300H333M350.400 219.300V336M350.400 383V421M350.400 438.300V480.700M350.400 498.300V526M350.400 574V711.300M146.300 459.300H398.300V504M398.300 522.700V558M230.300 434V480M230.300 512V546.700M230.300 565V580M194.300 489.300H212M116 489.300H168M194.300 489.300V507.300H230.300M104.300 512V590M104.300 543.300H194.300V638.300M194.300 641.700V711.300M104.300 617V660M104.300 678.300V711.300H398.300V700M116 603.300H146.300M194.300 603.300H212M230.300 585.300H261M230.600 333.300H260M194.300 315.300H212M122 327H146.500M230.300 618V711.300M278.300 609V711.300M104.300 444V480M62.300 462V453.300H92.700"/>
</g>
<path d="M104.500 304V252M146.400 236V327M146.400 603V711M398.300 648.700V700M404.500 252V283M62.300 480V505M62.300 522V564M189 285H200M189 288H200M188.500 638.300H200M188.500 641.700H200M314 500H326.700M314 503.700H326.700M399 248H409M399 252H409M398 283H410M400.500 287H408M392.700 646H404.700M395 650H402M392.700 680.700H404.700M396 684H401M392.700 558.300H404.700M395.500 562.700H401.500M57 564H68.700M60 569.300H65.500" class="cp"/>
<circle cx="62" cy="513.300" r="8.700" class="rs"/><path d="M56.500 514c2-4 3.500-3 5.500 0s3.500 3 5.500-1" class="cp"/>
<use href="#di" x="146.500" y="233"/><use href="#di" x="146.500" y="269.500"/><use href="#di" x="146.500" y="306"/><use href="#di" x="146.300" y="618"/><use href="#di" x="146.300" y="654"/><use href="#di" x="146.300" y="690"/>
<use href="#rv" x="104.400" y="252"/><use href="#rv" x="146.400" y="349"/><use href="#rv" x="230.400" y="361"/><use href="#rv" x="278.400" y="402.300"/><use href="#rv" x="350.400" y="420.500"/><use href="#rv" x="62.300" y="462"/><use href="#rv" x="350.400" y="480.500"/><use href="#rv" x="398.300" y="504.300"/><use href="#rv" x="230.300" y="546.700"/><use href="#rv" x="146.300" y="564.300"/><use href="#rv" x="104.300" y="660"/>
<use href="#rh" x="293" y="369.300"/><use href="#rh" x="168" y="429.300"/><use href="#rh" x="168" y="489.300"/><use href="#rh" x="293" y="549.300"/>
<use href="#qL" x="112" y="327"/><use href="#qL" x="112" y="429.300"/><use href="#qL" x="112" y="489.300"/><use href="#qL" x="112" y="603.300"/>
<use href="#qR" x="222.700" y="315.300"/><use href="#qR" x="270.700" y="333.300"/><use href="#qR" x="222.700" y="429.300"/><use href="#qR" x="222.700" y="489.300"/><use href="#qR" x="222.700" y="603.300"/><use href="#qR" x="271" y="585.300"/><use href="#qR" x="342.700" y="369.300"/><use href="#qR" x="342.700" y="549.300"/>
<g class="dt">
<circle cx="146.500" cy="219.300" r="2.600"/><circle cx="194.300" cy="219.300" r="2.600"/><circle cx="230.600" cy="219.300" r="2.600"/><circle cx="278.400" cy="219.300" r="2.600"/><circle cx="350.200" cy="219.300" r="2.600"/><circle cx="146.500" cy="327.300" r="2.600"/><circle cx="194.300" cy="315.300" r="2.600"/><circle cx="230.600" cy="333.300" r="2.600"/><circle cx="278.300" cy="369.300" r="2.600"/><circle cx="320.300" cy="369.300" r="2.600"/><circle cx="104.300" cy="387.300" r="2.600"/><circle cx="230.300" cy="411.300" r="2.600"/><circle cx="194.300" cy="429.300" r="2.600"/><circle cx="92.700" cy="453.300" r="2.600"/><circle cx="104.300" cy="453.300" r="2.600"/><circle cx="146.300" cy="459.300" r="2.600"/><circle cx="230.300" cy="459.300" r="2.600"/><circle cx="350.300" cy="459.300" r="2.600"/><circle cx="356.300" cy="459.300" r="2.600"/><circle cx="194.300" cy="489.300" r="2.600"/><circle cx="230.300" cy="507.300" r="2.600"/><circle cx="104.300" cy="543.300" r="2.600"/><circle cx="278.300" cy="549.300" r="2.600"/><circle cx="320.300" cy="549.300" r="2.600"/><circle cx="230.300" cy="585.300" r="2.600"/><circle cx="146.300" cy="603.300" r="2.600"/><circle cx="194.300" cy="603.300" r="2.600"/><circle cx="146.300" cy="711.300" r="2.600"/><circle cx="194.300" cy="711.300" r="2.600"/><circle cx="230.300" cy="711.300" r="2.600"/><circle cx="278.300" cy="711.300" r="2.600"/><circle cx="350.300" cy="711.300" r="2.600"/>
</g>
<text x="129" y="245.700">D3</text><text x="88.600" y="257">R19</text><text x="87" y="270">470</text><text x="132" y="278">D4</text><text x="132" y="314">D5</text><text x="209" y="278">C11</text><text x="209.400" y="294.700">33p</text><text x="85" y="319">Q13</text><text x="79.600" y="336.700">BD140</text><text x="243" y="315">Q17</text><text x="294" y="334">Q21</text><text x="387" y="245.700">V1</text><text x="386" y="261.700">45v</text><text x="167.800" y="351.300">R21</text><text x="168" y="364.300">10k</text><text x="246.700" y="366.300">R26</text><text x="250" y="380">77.5</text><text x="298.700" y="361.700">R29</text><text x="298.700" y="381.700">1</text><text x="369.300" y="374.300">Q23</text><text x="382" y="388.300">2SC5200</text><text x="300.300" y="409.300">R28</text><text x="295.300" y="419.300">62</text><text x="368.300" y="425.700">R31</text><text x="370.300" y="438.300">0.01</text><text x="87.700" y="416.300">Q14</text><text x="79" y="431.300">BD139</text><text x="177" y="418.700">1.2k</text><text x="177" y="441.300">R23</text><text x="243.300" y="430.300">Q18</text><text x="253" y="443.300">BD139</text><text x="96.300" y="450" class="br">in</text><text x="364.300" y="456" class="br">out</text><text x="80.300" y="467.300">R76</text><text x="73.300" y="480.700">1</text><text x="127.300" y="500.300">Q15</text><text x="127.300" y="511.300">BD140</text><text x="177" y="502.300">R24</text><text x="177" y="513.700">1.2k</text><text x="245.300" y="483.700">Q19</text><text x="252" y="497.300">BD140</text><text x="296.700" y="492.300">C13</text><text x="296.700" y="508.700">10n</text><text x="367.300" y="490.300">R32</text><text x="412" y="509.700">RL</text><text x="415" y="524.300">4</text><text x="82.300" y="515.300">V5</text><text x="56.700" y="500.700" class="s">+</text><text x="56.700" y="526" class="s">-</text><text x="250" y="548.300">R27</text><text x="258.300" y="560.300">R(R26)</text><text x="301.700" y="540.300">R30</text><text x="300.300" y="559.700">1</text><text x="367.300" y="560.300">Q24</text><text x="380.700" y="575.300">2SA1943</text><text x="166.300" y="569.300">R22</text><text x="166.300" y="581.300">10k</text><text x="291.300" y="586.300">Q22</text><text x="83.300" y="591.300">Q16</text><text x="80" y="606.300">BD139</text><text x="244.300" y="605.300">Q20</text><text x="131.700" y="632.300">D6</text><text x="210" y="632.300">C12</text><text x="212.300" y="646.300">33p</text><text x="131.300" y="665.300">D7</text><text x="130.300" y="683.300">D8</text><text x="86.700" y="662.300">R20</text><text x="89.300" y="676.300">470</text><text x="380.700" y="662.300">V2</text><text x="383.300" y="674.300">45v</text>
<g id="sub1">
<path d="M278 849.300H318M338.400 813V849.300M374.300 813V849.300" class="wr"/><path d="M318 849.300H319.600M319.600 843V856M322.400 843V856M322.400 849.300H356M356 843V856M358.800 843V856M358.800 849.300H374.300" class="cp"/>
<use href="#sm" x="338.400" y="849.300"/><use href="#sm" x="374.300" y="849.300"/>
<circle cx="284.500" cy="849.300" r="2.600" class="dt"/><circle cx="338.400" cy="849.300" r="2.600" class="dt"/><circle cx="374.300" cy="849.300" r="2.600" class="dt"/><circle cx="374.300" cy="813" r="2.600" class="dt"/>
</g>
<use href="#sub1" y="90"/>
<g class="s">
<text x="326.500" y="826.700" class="s">C20</text><text x="328" y="837.700" class="s">25p</text><text x="362.500" y="826.700" class="s">C21</text><text x="363.500" y="837.700" class="s">25p</text><text x="291" y="845" class="s br">out</text><text x="383" y="809" class="s br">outd</text><text x="321.500" y="862.700" class="s">R56</text><text x="323" y="873.700" class="s">10k</text><text x="357.500" y="862.700" class="s">R57</text><text x="359" y="873.700" class="s">10k</text>
<text x="326.500" y="916.700" class="s">C24</text><text x="328" y="927.700" class="s">25p</text><text x="362.500" y="916.700" class="s">C25</text><text x="363.500" y="927.700" class="s">25p</text><text x="293" y="935" class="s br">out1</text><text x="385" y="911" class="s br">out1d</text><text x="321.500" y="952.700" class="s">R60</text><text x="322.500" y="963.700" class="s">10k</text><text x="357.500" y="952.700" class="s">R61</text><text x="359" y="963.700" class="s">10k</text>
</g>
</svg>
<div class="tabs d-flex align-items-center ps-1"><span class="nb"><svg><use href="#n1"/></svg></span><span class="nb"><svg><use href="#n2"/></svg></span><span class="nb"><svg><use href="#n3"/></svg></span><span class="nb"><svg><use href="#n4"/></svg></span><svg class="sl" viewBox="0 0 7 16"><path d="M1 0l5 16" stroke="#111"/></svg><b class="fw-bold ms-1">Main</b><svg class="sl ms-1" viewBox="0 0 7 16"><path d="M6 0L1 16" stroke="#111"/></svg><span class="ms-1">Text</span><svg class="sl ms-1" viewBox="0 0 7 16"><path d="M1 0l5 16" stroke="#111"/></svg><span class="ms-1">Models</span><svg class="sl ms-1" viewBox="0 0 7 16"><path d="M1 0l5 16" stroke="#111"/></svg><span class="ms-1">Info</span><svg class="sl ms-1" viewBox="0 0 7 16"><path d="M6 0L1 16" stroke="#111"/></svg><span class="tln"></span><span class="nb ms-1 me-0 wn"><svg><use href="#n2"/></svg></span></div>
</div>

<!-- WINDOW 2 -->
<div class="cw cw2 d-flex flex-column">
<div class="head d-flex align-items-start"><svg class="hic"><use href="#h1"/></svg><span class="flex-grow-1">Intermodulation Distortion Plot:H1 vs PIN,IM2 vs PIN,IM3 vs PIN</span><span class="wb"><svg><use href="#mn"/></svg></span><span class="wb"><svg><use href="#mx"/></svg></span><span class="wb wbr"><svg><use href="#xw"/></svg></span></div>
<div class="tbar">
<div class="tr d-flex align-items-center"><svg class="ti"><use href="#ia"/></svg><svg class="ti"><use href="#cp"/></svg><svg class="dd"><use href="#dd"/></svg><svg class="ti"><use href="#pic"/></svg><svg class="ti on"><use href="#zp"/></svg><svg class="ti"><use href="#pk"/></svg><svg class="ti"><use href="#ah"/></svg><svg class="ti"><use href="#av"/></svg><svg class="ti"><use href="#ad"/></svg><svg class="ti"><use href="#fx"/></svg><svg class="ti"><use href="#tt"/></svg><i class="sp"></i><svg class="ti"><use href="#nt"/></svg><i class="sp"></i><svg class="ti on"><use href="#r1"/></svg><svg class="ti"><use href="#r2"/></svg><i class="sp"></i><svg class="ti"><use href="#os"/></svg><svg class="ti"><use href="#ds"/></svg><i class="sp"></i></div>
<div class="tr d-flex align-items-center"><svg class="ti on"><use href="#vb"/></svg><svg class="ti on"><use href="#hb"/></svg><svg class="ti"><use href="#v3"/></svg><svg class="ti"><use href="#v2"/></svg><i class="sp"></i><svg class="ti"><use href="#hl"/></svg><svg class="ti"><use href="#cr"/></svg><i class="sp"></i><svg class="ti"><use href="#cx"/></svg><svg class="ti"><use href="#cy"/></svg><svg class="ti"><use href="#cf"/></svg><svg class="ti"><use href="#cg"/></svg><i class="sp"></i><svg class="ti on"><use href="#g1"/></svg><svg class="ti"><use href="#g2"/></svg><svg class="ti"><use href="#g3"/></svg><svg class="ti"><use href="#g4"/></svg><svg class="ti"><use href="#g5"/></svg><svg class="ti"><use href="#g6"/></svg><svg class="ti"><use href="#g7"/></svg><svg class="ti"><use href="#g8"/></svg><svg class="ti"><use href="#g9"/></svg><i class="sp"></i></div>
<div class="tr nl d-flex align-items-center"><svg class="ti on"><use href="#s1"/></svg><svg class="ti on"><use href="#s2"/></svg><i class="sp"></i><svg class="ti"><use href="#zi"/></svg><svg class="ti"><use href="#zo"/></svg><svg class="ti"><use href="#z1"/></svg><i class="sp"></i><svg class="ti"><use href="#gd"/></svg><svg class="dd"><use href="#ddg"/></svg><svg class="ti"><use href="#bA"/></svg><i class="sp"></i><svg class="ti"><use href="#q1"/></svg><svg class="ti"><use href="#q2"/></svg></div>
</div>
<svg class="cvs pt" width="475" height="821" viewBox="431 182 475 821">
<path d="M545.300 199.300V939.300M628.600 199.300V939.300M712.600 199.300V939.300M795.500 199.300V939.300M462.400 347.300H878.800M462.400 495.300H878.800M462.400 643.300H878.800M462.400 791.300H878.800" class="gd"/>
<rect x="462.400" y="199.300" width="416.400" height="740" class="bx"/>
<path d="M512 513L774 459" stroke="#1a1ab8" stroke-width="1.400" fill="none"/><path d="M774 459L878 435" stroke="#1a1ab8" stroke-dasharray="2 1" fill="none"/><path d="M512 812L774 713" stroke="#1d7a2a" fill="none"/><path d="M512 860L774 808" stroke="#c62828" fill="none"/>
<path d="M512 510l3 3-3 3-3-3zM774 456l3 3-3 3-3-3z" fill="#fff" stroke="#1a1ab8"/><path d="M512 809l3 3-3 3-3-3zM774 710l3 3-3 3-3-3z" fill="#fff" stroke="#1d7a2a"/><path d="M512 857l3 3-3 3-3-3zM774 805l3 3-3 3-3-3z" fill="#fff" stroke="#c62828"/>
<text x="669" y="192.700" class="mi">H1 vs PIN,IM2 vs PIN,IM3 vs PIN</text>
<text x="460" y="199.500" class="ra">100</text><text x="460" y="347.300" class="ra">50</text><text x="460" y="495.300" class="ra">0</text><text x="460" y="643.300" class="ra">-50</text><text x="460" y="791.300" class="ra">-100</text><text x="460" y="939.300" class="ra">-150</text>
<text x="469" y="946.700" class="mi">-42</text><text x="545.300" y="946.700" class="mi">-36</text><text x="629" y="946.700" class="mi">-30</text><text x="712.600" y="946.700" class="mi">-24</text><text x="795.500" y="946.700" class="mi">-18</text><text x="878.800" y="946.700" class="mi">-12</text>
<text x="462.400" y="960" text-decoration="underline">H1 (dBW)</text><text x="617" y="960" class="rd">IM2 (dBW)</text><text x="462.400" y="972.700" class="gr">IM3 (dBW)</text><text x="595" y="985.700">PIN (dBW)</text>
</svg>
</div>

<!-- WINDOW 3 -->
<div class="cw cw3 d-flex flex-column">
<div class="head d-flex align-items-start"><svg class="hic"><use href="#h2"/></svg><span class="flex-grow-1">In...</span><span class="wb"><svg><use href="#mn"/></svg></span><span class="wb"><svg><use href="#mx"/></svg></span><span class="wb"><svg><use href="#xx"/></svg></span></div>
<div class="tbar">
<div class="tr nl h23 d-flex align-items-center"><svg class="ti"><use href="#ia"/></svg><svg class="ti"><use href="#cp"/></svg><svg class="dd"><use href="#dd"/></svg><svg class="ti"><use href="#pic"/></svg><svg class="ti on"><use href="#zp"/></svg><svg class="ti"><use href="#pk"/></svg></div>
<div class="tr h25 d-flex align-items-center"><svg class="ti"><use href="#ah"/></svg><svg class="ti"><use href="#av"/></svg><svg class="ti"><use href="#ad"/></svg><svg class="ti"><use href="#fx"/></svg><svg class="ti"><use href="#tt"/></svg><i class="sp"></i></div>
<div class="tr d-flex align-items-center"><svg class="ti"><use href="#nt"/></svg><i class="sp"></i><svg class="ti"><use href="#pl"/></svg><svg class="ti"><use href="#st"/></svg><svg class="ti"><use href="#pa"/></svg><i class="sp"></i></div>
<div class="tr d-flex align-items-center"><svg class="ti"><use href="#r1"/></svg><svg class="ti"><use href="#r2"/></svg><i class="sp"></i><svg class="ti"><use href="#os"/></svg><svg class="ti"><use href="#ds"/></svg><i class="sp"></i></div>
<div class="tr d-flex align-items-center"><svg class="ti on"><use href="#vb"/></svg><svg class="ti on"><use href="#hb"/></svg><svg class="ti"><use href="#v3"/></svg><svg class="ti"><use href="#v2"/></svg><i class="sp"></i></div>
<div class="tr d-flex align-items-center"><svg class="ti"><use href="#hl"/></svg><svg class="ti"><use href="#cr"/></svg><i class="sp"></i></div>
<div class="tr d-flex align-items-center"><svg class="ti"><use href="#cx"/></svg><svg class="ti"><use href="#cy"/></svg><svg class="ti"><use href="#cf"/></svg><svg class="ti"><use href="#ce"/></svg><i class="sp"></i><svg class="ti"><use href="#tb"/></svg><i class="sp"></i></div>
<div class="tr nl h26 d-flex align-items-center"><svg class="ti on"><use href="#g1"/></svg><svg class="ti"><use href="#g2"/></svg><svg class="ti"><use href="#g3"/></svg><svg class="ti"><use href="#g4"/></svg><svg class="ti"><use href="#g5"/></svg><svg class="ti"><use href="#g6"/></svg></div>
<div class="tr h23 d-flex align-items-center"><svg class="ti"><use href="#g7"/></svg><svg class="ti"><use href="#g8"/></svg><svg class="ti"><use href="#g9"/></svg><svg class="ti"><use href="#g10"/></svg><svg class="ti"><use href="#g11"/></svg><i class="sp"></i></div>
<div class="tr d-flex align-items-center"><svg class="ti"><use href="#cl"/></svg><svg class="dd"><use href="#dd"/></svg><i class="sp"></i><svg class="ti"><use href="#ls"/></svg><i class="sp"></i><svg class="ti"><use href="#cn"/></svg><i class="sp"></i></div>
<div class="tr d-flex align-items-center"><svg class="ti on"><use href="#s1"/></svg><svg class="ti on"><use href="#s2"/></svg><i class="sp"></i><svg class="ti"><use href="#zi"/></svg><svg class="ti"><use href="#zo"/></svg><svg class="ti"><use href="#z1"/></svg></div>
<div class="tr nl h26 d-flex align-items-center"><svg class="ti"><use href="#gd"/></svg><svg class="dd"><use href="#ddg"/></svg><svg class="ti"><use href="#bA"/></svg><i class="sp"></i><svg class="ti"><use href="#q1"/></svg><svg class="ti"><use href="#q2"/></svg></div>
</div>
<svg class="cvs pt" width="144" height="576" viewBox="921 413 144 576">
<path d="M961 456.800H1037M961 479.900H1037M961 503H1037M961 526.100H1037M961 549.200H1037M961 572.300H1037M961 595.400H1037M961 618.500H1037M961 641.600H1037M969 434V665M976.600 434V665M984.200 434V665M991.800 434V665M999.400 434V665M1007 434V665M1014.600 434V665M1022.200 434V665M1029.800 434V665" class="gd"/>
<rect x="961.300" y="433.700" width="76" height="231.300" class="bx"/>
<path d="M961.300 507V660L962 540 963 566.700 965 578 966 586 968 596 971.700 608.300 974 596 975 600 977 584 979.300 574.600 980.700 515 982 570.600 985 584 986 592 988 598 990 606 994 586 995 590 997 572 999.300 564.700 1002 578 1004 586 1006 598 1009.300 606.300 1013 590 1014 594 1016 578 1018.700 572.600 1022 586 1023 592 1026 600 1028.300 606.300 1032 594 1037.300 580.600V647H961.300z" fill="#007a12"/>
<path d="M961.300 644L964 654 968 649 972 655 976 650 979 645 980.700 629 983 646 987 652 992 650 997 647 1002 653 1007 651 1012 649 1017 654 1022 652 1027 649 1032 654 1037 650" fill="none" stroke="#e81010" stroke-width="3.500"/>
<path d="M969.300 833L971 900 973 935.700 976 880 979 800 981.700 759 984 800 987 890 990 935.700 993 880 996 800 998.700 759 1001 800 1004 890 1007.300 935.700 1010 880 1013 800 1015.700 759 1018 800 1019.300 862" fill="none" stroke="#007a12" stroke-width="3.200"/>
<path d="M969.300 845L973 856 977 848 981.700 838.500 986 848 990 856 994 848 998.700 838.500 1003 848 1007.300 856 1011 848 1015.700 838.500 1019 847" fill="none" stroke="#e81010" stroke-width="4"/>
<path d="M969.300 713V938M984.400 713V938M999.600 713V938M1015 713V938M961.300 758H1037.300M961.300 803.200H1037.300M961.300 848.400H1037.300M961.300 893.600H1037.300" class="gd"/>
<rect x="961.300" y="712.700" width="76" height="225.800" class="bx"/>
<g class="wd"><text x="961.300" y="425.800">ZAM 1_1.CIR VI</text>
<text x="930" y="433.700">100M</text><text x="930" y="456.800">1M</text><text x="930" y="479.900">10K</text><text x="930" y="503">100</text><text x="930" y="526.100">1</text><text x="930" y="549.200">10m</text><text x="930" y="572.300">100u</text><text x="930" y="595.400">1u</text><text x="930" y="618.500">10n</text><text x="930" y="641.600">100p</text><text x="930" y="665">1p</text>
<text x="961.300" y="672">2.0E-02K</text><text x="1023" y="672">28.0K</text><text x="961.300" y="685.700" text-decoration="underline">HARM(V(RL))</text><text x="935" y="698.400">F (Hz)</text>
<text x="958.500" y="712.700" class="ra">60.00</text><text x="958.500" y="758" class="ra">40.00</text><text x="958.500" y="803.200" class="ra">20.00</text><text x="958.500" y="848.400" class="ra">0.00</text><text x="958.500" y="893.600" class="ra">-20.00</text><text x="958.500" y="938.500" class="ra">-40.00</text>
<text x="962" y="945">142.50m</text><text x="1016" y="945">217.50m</text><text x="961.300" y="958.700" class="rd">V(RL) (V)</text><text x="930" y="971">T (Secs)</text></g>
</svg>
<div class="tabs d-flex align-items-center pl13"><span class="nb"><svg><use href="#n0"/></svg></span><span class="nb ms-1"><svg><use href="#n1"/></svg></span><span class="nb"><svg><use href="#n2"/></svg></span><span class="nb"><svg><use href="#n3"/></svg></span><span class="nb"><svg><use href="#n4"/></svg></span><svg class="sl ms-1" viewBox="0 0 7 16"><path d="M1 0l5 16" stroke="#111"/></svg><b class="fw-bold">Main</b><svg class="sl" viewBox="0 0 7 16"><path d="M6 0L1 16" stroke="#111"/></svg><span class="tln"></span></div>
</div>

<!-- WINDOW 4 -->
<div class="cw cw4 d-flex flex-column">
<div class="head d-flex align-items-start"><svg class="hic"><use href="#h1"/></svg><span class="flex-grow-1">Harmonic Distortion Plot:THD vs F : VIN = 38V</span><span class="wb"><svg><use href="#mn"/></svg></span><span class="wb"><svg><use href="#mx"/></svg></span><span class="wb"><svg><use href="#xx"/></svg></span></div>
<div class="tbar">
<div class="tr d-flex align-items-center ps-0"><svg class="ti"><use href="#ia"/></svg><svg class="ti"><use href="#cp"/></svg><svg class="dd"><use href="#dd"/></svg><svg class="ti"><use href="#pic"/></svg><svg class="ti on"><use href="#zp"/></svg><svg class="ti"><use href="#pk"/></svg><svg class="ti"><use href="#ah"/></svg><svg class="ti"><use href="#av"/></svg><svg class="ti"><use href="#ad"/></svg><svg class="ti"><use href="#fx"/></svg><svg class="ti"><use href="#tt"/></svg><i class="sp"></i><svg class="ti"><use href="#nt"/></svg><i class="sp"></i><svg class="ti on"><use href="#r1"/></svg><svg class="ti"><use href="#r2"/></svg><i class="sp"></i><svg class="ti"><use href="#os"/></svg><svg class="ti"><use href="#ds"/></svg><i class="sp"></i><svg class="ti on"><use href="#vb"/></svg><svg class="ti on"><use href="#hb"/></svg><svg class="ti"><use href="#v3"/></svg><svg class="ti"><use href="#v2"/></svg><i class="sp"></i><svg class="ti"><use href="#hl"/></svg><svg class="ti"><use href="#cr"/></svg><i class="sp"></i></div>
<div class="tr nl h26 d-flex align-items-center ps-0"><svg class="ti"><use href="#cx"/></svg><svg class="ti"><use href="#cy"/></svg><svg class="ti"><use href="#cf"/></svg><svg class="ti"><use href="#cg"/></svg><i class="sp"></i><svg class="ti on"><use href="#g1"/></svg><svg class="ti"><use href="#g2"/></svg><svg class="ti"><use href="#g3"/></svg><svg class="ti"><use href="#g4"/></svg><svg class="ti"><use href="#g5"/></svg><svg class="ti"><use href="#g6"/></svg><svg class="ti"><use href="#g7"/></svg><svg class="ti"><use href="#g8"/></svg><svg class="ti"><use href="#g9"/></svg><i class="sp"></i><svg class="ti on"><use href="#s1"/></svg><svg class="ti on"><use href="#s2"/></svg><i class="sp"></i><svg class="ti"><use href="#zi"/></svg><svg class="ti"><use href="#zo"/></svg><svg class="ti"><use href="#z1"/></svg><i class="sp"></i><svg class="ti"><use href="#gd"/></svg><svg class="dd"><use href="#ddg"/></svg><svg class="ti"><use href="#bA"/></svg><i class="sp"></i><svg class="ti"><use href="#q1"/></svg><svg class="ti"><use href="#q2"/></svg></div>
</div>
<svg class="cvs pt" width="563" height="849" viewBox="1077 154 563 849">
<path d="M1214.700 172.300V952.300M1314.300 172.300V952.300M1413.500 172.300V952.300M1513.500 172.300V952.300M1114.700 270H1613.500" class="gd"/>
<rect x="1114.700" y="172.300" width="498.800" height="780" class="bx"/>
<path d="M1215 341.700H1315L1414 356 1444 397 1484 648 1513.500 906" fill="none" stroke="#1a1ab8" stroke-width="1.200"/>
<path d="M1215 339l2.500 2.700-2.500 2.700-2.500-2.700zM1315 339l2.500 2.700-2.500 2.700-2.500-2.700zM1414 353.300l2.500 2.700-2.500 2.700-2.500-2.700zM1444 394.300l2.500 2.700-2.500 2.700-2.500-2.700zM1484 645.300l2.500 2.700-2.500 2.700-2.500-2.700zM1513.500 903.300l2.500 2.700-2.500 2.700-2.500-2.700z" fill="#fff" stroke="#1a1ab8"/>
<text x="1363.700" y="165.700" class="mi">THD vs F : VIN = 38V</text>
<text x="1079.600" y="172.500">5.06m</text><text x="1079.600" y="270">5m</text>
<text x="1120" y="960" class="mi">10</text><text x="1214" y="960" class="mi">100</text><text x="1315" y="960" class="mi">1K</text><text x="1414" y="960" class="mi">10K</text><text x="1514.700" y="960" class="mi">100K</text><text x="1614" y="960" class="mi">1M</text>
<text x="1142" y="972" class="mi" text-decoration="underline">THD (%V/V)</text><text x="1312.700" y="985" class="mi">F (Hz)</text>
</svg>
</div>

<!-- WINDOW 5 -->
<div class="cw cw5 d-flex flex-column">
<div class="head d-flex align-items-start"><svg class="hic"><use href="#h2"/></svg><span class="flex-grow-1">Harmonic Distorti...</span><span class="wb"><svg><use href="#mn"/></svg></span><span class="wb"><svg><use href="#mx"/></svg></span><span class="wb"><svg><use href="#xx"/></svg></span></div>
<div class="tbar">
<div class="tr nl h22 d-flex align-items-center"><svg class="ti"><use href="#ia"/></svg><svg class="ti"><use href="#cp"/></svg><svg class="dd"><use href="#dd"/></svg><svg class="ti"><use href="#pic"/></svg><svg class="ti on"><use href="#zp"/></svg><svg class="ti"><use href="#pk"/></svg><svg class="ti"><use href="#ah"/></svg><svg class="ti"><use href="#av"/></svg><svg class="ti"><use href="#ad"/></svg><svg class="ti"><use href="#fx"/></svg></div>
<div class="tr h25 d-flex align-items-center"><svg class="ti"><use href="#tt"/></svg><i class="sp"></i><svg class="ti"><use href="#nt"/></svg><i class="sp"></i><svg class="ti"><use href="#pl"/></svg><svg class="ti"><use href="#st"/></svg><svg class="ti"><use href="#pa"/></svg><i class="sp"></i><svg class="ti"><use href="#r1"/></svg><svg class="ti"><use href="#r2"/></svg><i class="sp"></i></div>
<div class="tr d-flex align-items-center"><svg class="ti"><use href="#os"/></svg><svg class="ti"><use href="#ds"/></svg><i class="sp"></i><svg class="ti on"><use href="#vb"/></svg><svg class="ti on"><use href="#hb"/></svg><svg class="ti on"><use href="#v3"/></svg><svg class="ti"><use href="#v2"/></svg><i class="sp"></i><svg class="ti"><use href="#hl"/></svg><svg class="ti"><use href="#cr"/></svg><i class="sp"></i></div>
<div class="tr d-flex align-items-center"><svg class="ti"><use href="#cx"/></svg><svg class="ti"><use href="#cy"/></svg><svg class="ti"><use href="#cf"/></svg><svg class="ti"><use href="#ce"/></svg><i class="sp"></i><svg class="ti"><use href="#tb"/></svg><i class="sp"></i></div>
<div class="tr nl h25 d-flex align-items-center"><svg class="ti on"><use href="#g1"/></svg><svg class="ti"><use href="#g2"/></svg><svg class="ti"><use href="#g3"/></svg><svg class="ti"><use href="#g4"/></svg><svg class="ti"><use href="#g5"/></svg><svg class="ti"><use href="#g6"/></svg><svg class="ti"><use href="#g7"/></svg><svg class="ti"><use href="#g8"/></svg><svg class="ti"><use href="#g9"/></svg></div>
<div class="tr h24 d-flex align-items-center"><svg class="ti"><use href="#g10"/></svg><svg class="ti"><use href="#g11"/></svg><i class="sp"></i><svg class="ti"><use href="#cl"/></svg><svg class="dd"><use href="#dd"/></svg><i class="sp"></i><svg class="ti"><use href="#ls"/></svg><i class="sp"></i><svg class="ti"><use href="#cn"/></svg><i class="sp"></i><svg class="ti on"><use href="#s1"/></svg><svg class="ti on"><use href="#s2"/></svg><i class="sp"></i></div>
<div class="tr nl d-flex align-items-center"><svg class="ti"><use href="#zi"/></svg><svg class="ti"><use href="#zo"/></svg><svg class="ti"><use href="#z1"/></svg><i class="sp"></i><svg class="ti"><use href="#gd"/></svg><svg class="dd"><use href="#ddg"/></svg><svg class="ti"><use href="#bA"/></svg><i class="sp"></i><svg class="ti"><use href="#q1"/></svg><svg class="ti"><use href="#q2"/></svg></div>
</div>
<svg class="cvs pt" width="232" height="708" viewBox="1658 278 232 708">
<path d="M1736.700 311V609M1767.300 311V609M1799.300 311V609M1830.700 311V609M1705.300 370.600H1861.700M1705.300 430.300H1861.700M1705.300 490H1861.700M1705.300 549.600H1861.700" class="gd"/>
<path d="M1751 311H1705.300V609H1861.700V311" class="bx"/>
<path d="M1706 375.700V603.500" stroke="#e01010" stroke-width="2"/><path d="M1717.300 375.700V490" stroke="#d01010"/><path d="M1716.700 490V603.500" stroke="#e01010" stroke-width="1.800"/>
<path d="M1817 490L1818.300 500 1819 551 1821 603.500 1822.500 551 1824 490 1825 430 1826 396 1827 376 1828.300 386 1829.500 425 1830 470 1831 488" fill="none" stroke="#c81818" stroke-width="1.400"/>
<path d="M1736.700 643V935M1767.300 643V935M1799.300 643V935M1830.700 643V935M1705.300 701.500H1861.700M1705.300 760H1861.700M1705.300 818.500H1861.700M1705.300 877H1861.700" class="gd"/>
<rect x="1705.300" y="643" width="156.400" height="292" class="bx"/>
<path d="M1705 715V900" stroke="#1a9ab8"/><path d="M1706.300 715V896" stroke="#d030c8" stroke-width="1.500"/><path d="M1705.500 715V726" stroke="#e0c050" stroke-width="1.500"/><path d="M1717.300 714V896" stroke="#0a7a14"/><path d="M1716.700 805V896" stroke="#0a7a14" stroke-width="1.500"/>
<path d="M1817 802L1818 850 1819.500 890 1820.500 830 1822 780 1823 720 1824.500 711 1825 780 1826 850 1827.500 886 1828.500 830 1829 770 1830 716 1831 745 1831.500 790" fill="none" stroke="#c81818" stroke-width="1.400"/><path d="M1828.500 716V736M1819 875V888" stroke="#e01010" stroke-width="2"/>
<g class="wd"><text x="1705" y="290">ZAM 1_1.CIR F=100...100K</text><text x="1705" y="304">VIN=38V</text><text x="1752.300" y="307.800" class="nosp">Amplitude of V(OUT) vs Freq</text>
<text x="1702.500" y="311" class="ra">60.000</text><text x="1702.500" y="370.600" class="ra">40.000</text><text x="1702.500" y="430.300" class="ra">20.000</text><text x="1702.500" y="490" class="ra">0.000</text><text x="1702.500" y="549.600" class="ra">-20.000</text><text x="1702.500" y="609" class="ra">-40.000</text>
<text x="1705" y="616.600">0.000m</text><text x="1746.700" y="616.600">50.000m</text><text x="1838" y="616.600" class="nosp">125.000m</text><text x="1705" y="629.700" class="rd" text-decoration="underline">V(RL) (V)</text>
<text x="1702.500" y="643" class="ra">183.00</text><text x="1702.500" y="701.500" class="ra">182.00</text><text x="1702.500" y="760" class="ra">181.00</text><text x="1702.500" y="818.500" class="ra">180.00</text><text x="1702.500" y="877" class="ra">179.00</text><text x="1702.500" y="935" class="ra">178.00</text>
<text x="1705" y="942">0.00m</text><text x="1750" y="942">50.00m</text><text x="1841" y="942">125.00m</text><text x="1705" y="956">RMS(V(RL))*RMS(I(RL))</text><text x="1714" y="968.500">T (Secs)</text></g>
</svg>
<div class="tabs d-flex align-items-center pl10"><span class="nb"><svg><use href="#n0"/></svg></span><span class="nb ms-1"><svg><use href="#n1"/></svg></span><span class="nb"><svg><use href="#n2"/></svg></span><span class="nb"><svg><use href="#n3"/></svg></span><span class="nb"><svg><use href="#n4"/></svg></span><svg class="sl ms-1" viewBox="0 0 7 16"><path d="M1 0l5 16" stroke="#111"/></svg><b class="fw-bold">Main</b><svg class="sl" viewBox="0 0 7 16"><path d="M6 0L1 16" stroke="#111"/></svg><span class="tln"></span><span class="nb me-0 wh"></span></div>
</div>
</div>
<div class="btabs d-flex"><span>THD vs F</span><span>Harmonic Distortion Analysis</span><span class="act">ZAM 1_1.CIR</span></div>
</div>
</div>

<div class="task d-flex align-items-center">
<div class="orb"><svg width="38" height="38" viewBox="0 0 38 38"><circle cx="19" cy="19" r="18" fill="#2a6cb8" stroke="#cfe3f5"/><path d="M9 13l9-2v7l-9 1z" fill="#e2502a"/><path d="M20 11l9-3v9l-9 1z" fill="#72b82e"/><path d="M9 21l9-1v7l-9-2z" fill="#3b9ae2"/><path d="M20 20l9-1v9l-9-2z" fill="#f2c230"/></svg></div>
<span class="grip"></span>
<span class="tk"><svg viewBox="0 0 40 34"><path d="M6 6h9l3 3h17v8H6z" fill="#e4c25a" stroke="#a68a2c"/><path d="M4 12h32l-2 18H6z" fill="#f4de98" stroke="#b49a40"/><path d="M13 24h14v7H13z" fill="#6aaede" stroke="#2f6ea4"/></svg></span>
<span class="tk"><svg viewBox="0 0 40 34"><rect x="5" y="2" width="30" height="30" rx="1" fill="#4a0a30" stroke="#d8388c" stroke-width="2"/><text x="20" y="24" text-anchor="middle" font-family="Liberation Sans" font-size="18" font-weight="700" fill="#e8589c">Id</text></svg></span>
<span class="tk"><svg viewBox="0 0 40 34"><path d="M14 1h8v6h-2l8 8v4h8v10h-8l-4 5H14l-8-8v-8l8-8z" fill="#18a028"/><circle cx="19" cy="20" r="5" fill="#fff"/><circle cx="19" cy="20" r="2" fill="#18a028"/></svg></span>
<span class="tk"><svg viewBox="0 0 40 34"><rect x="4" y="1" width="32" height="32" fill="#a80c0c"/><text x="20" y="27" text-anchor="middle" font-family="Liberation Sans" font-size="25" font-weight="700" font-style="italic" fill="#fff">Fz</text></svg></span>
<span class="tk"><svg viewBox="0 0 40 34"><rect x="5" y="2" width="30" height="30" fill="#3c3c34"/><path d="M7 4h26M7 30h26" stroke="#ccc" stroke-width="2.500" stroke-dasharray="2 2"/><path d="M13 7l16 10-16 10z" fill="#e8b820"/><path d="M17 17h6M20 14v6" stroke="#222" stroke-width="2"/></svg></span>
<span class="tk"><svg viewBox="0 0 40 34"><circle cx="19" cy="17" r="14" fill="#e8c040" stroke="#a88a20"/><path d="M12 8l20 9-20 9z" fill="#f4d860" stroke="#555"/><path d="M14 17h6M17 14v6" stroke="#c33" stroke-width="2"/></svg></span>
<span class="tk"><svg viewBox="0 0 40 34"><rect x="8" y="1" width="24" height="32" rx="2" fill="#d6e4f2" stroke="#7a96b4"/><rect x="11" y="4" width="18" height="8" fill="#eef5fb" stroke="#7a96b4"/><path d="M11 16h4v3h-4zM17 16h4v3h-4zM23 16h4v3h-4zM11 21h4v3h-4zM17 21h4v3h-4zM23 21h4v3h-4zM11 26h4v3h-4zM17 26h4v3h-4zM23 26h4v3h-4z" fill="#7a96b4"/></svg></span>
<span class="tk"><svg viewBox="0 0 40 34"><rect x="6" y="2" width="28" height="30" fill="#3a3a30" stroke="#e0b020" stroke-width="2"/><path d="M11 6l18 10-18 10z" fill="#f0c828"/><path d="M14 16h6M17 13v6" stroke="#222" stroke-width="2"/><text x="28" y="30" text-anchor="middle" font-family="Liberation Sans" font-size="7" fill="#ddd">15</text></svg></span>
<span class="tk"><svg viewBox="0 0 40 34"><defs><radialGradient id="cy2"><stop offset="0" stop-color="#20e0f0"/><stop offset="1" stop-color="#0820b0"/></radialGradient></defs><rect x="4" y="1" width="32" height="32" fill="url(#cy2)"/></svg></span>
<span class="tk rn"><svg viewBox="0 0 40 34"><circle cx="20" cy="17" r="14" fill="#3aa84a"/><path d="M20 3a14 14 0 0 1 12 7H20a7 7 0 0 0-6 3L8 9a14 14 0 0 1 12-6z" fill="#e04a38"/><path d="M32 10a14 14 0 0 1-12 21l6-10a7 7 0 0 0 0-11z" fill="#f4c82a"/><circle cx="20" cy="17" r="6" fill="#3a7be0" stroke="#fff" stroke-width="1.500"/></svg></span>
<span class="tk rn"><svg viewBox="0 0 40 34"><rect x="7" y="2" width="26" height="30" fill="#fff" stroke="#ddd"/><text x="20" y="25" text-anchor="middle" font-family="Liberation Sans" font-size="22" font-weight="700" fill="#e02020">Я</text></svg></span>
<span class="tk rn"><svg viewBox="0 0 40 34"><circle cx="20" cy="17" r="14" fill="#e82020"/><text x="20" y="25" text-anchor="middle" font-family="Liberation Sans" font-size="22" font-weight="700" fill="#fff">Y</text></svg></span>
<span class="tk rn"><svg viewBox="0 0 40 34"><circle cx="20" cy="17" r="14" fill="#1aa0e0"/><text x="20" y="25" text-anchor="middle" font-family="Liberation Sans" font-size="22" font-weight="700" fill="#fff">S</text></svg></span>
<span class="tk rn cur"><svg viewBox="0 0 40 34"><circle cx="20" cy="17" r="14" fill="#a6c83a" stroke="#d8b020" stroke-width="3"/><text x="20" y="23" text-anchor="middle" font-family="Liberation Sans" font-size="16" fill="#123">11</text></svg></span>
<span class="tk rn"><svg viewBox="0 0 40 34"><ellipse cx="19" cy="21" rx="14" ry="9" fill="#e6e0d0" stroke="#998"/><circle cx="13" cy="19" r="2" fill="#e04a38"/><circle cx="20" cy="17" r="2" fill="#3a7be0"/><circle cx="26" cy="21" r="2" fill="#3aa84a"/><path d="M20 20L33 3l2 2-12 18z" fill="#c8a060" stroke="#765"/></svg></span>
<div class="tray d-flex align-items-center">
<span class="grip"></span>
<span class="tryi trl d-flex align-items-center">EN</span>
<svg class="tryi" viewBox="0 0 24 20"><path d="M8 12h8l-4-5z" fill="#f2f6fa" stroke="#667"/></svg>
<svg class="tryi" viewBox="0 0 24 20"><path d="M4 10c5-6 11-6 16-4v10H8c-2-2-3-4-4-6z" fill="#7ab800"/><circle cx="13" cy="10" r="3" fill="#c8e070"/></svg>
<svg class="tryi" viewBox="0 0 24 20"><rect x="4" y="2" width="16" height="16" fill="#d81e28"/><text x="12" y="15" text-anchor="middle" font-family="Liberation Serif" font-size="15" font-style="italic" fill="#fff">a</text></svg>
<svg class="tryi" viewBox="0 0 24 20"><path d="M6 2v17" stroke="#f4f6f8" stroke-width="1.500"/><path d="M7 3h10l-3 4 3 4H7z" fill="#f2f4f6" stroke="#667" stroke-width=".5"/></svg>
<svg class="tryi" viewBox="0 0 24 20"><rect x="7" y="3" width="13" height="12" fill="#c4d2de" stroke="#223"/><rect x="4" y="1" width="6" height="10" fill="#e8eef4" stroke="#223"/><path d="M10 18h8" stroke="#eef" stroke-width="2"/></svg>
<svg class="tryi" viewBox="0 0 24 20"><path d="M5 7h3l4-4v14l-4-4H5z" fill="#e8ecf0" stroke="#556" stroke-width=".6"/><path d="M15 6c2 2 2 6 0 8M18 4c3 3 3 9 0 12" fill="none" stroke="#e0e8f0"/></svg>
<svg class="tryi" viewBox="0 0 24 20"><path d="M4 10l8-6 8 3-6 8-9-1z" fill="#e8edf2" stroke="#334"/><path d="M6 10l12-4" stroke="#334"/></svg>
<div class="clock">19:33<br>02.07.2018</div>
<span class="shd"></span>
</div>
</div>
</body></html>
